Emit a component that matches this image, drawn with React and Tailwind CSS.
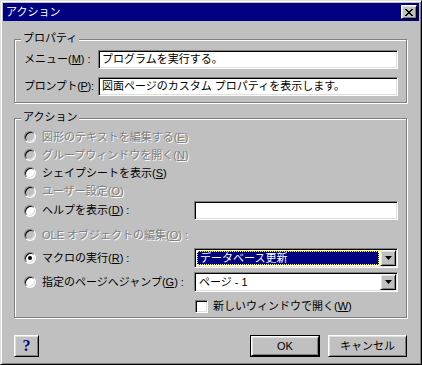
const sunken =
  "border border-t-[#808080] border-l-[#808080] border-b-white border-r-white shadow-[inset_1px_1px_0_#000,inset_-1px_-1px_0_#dfdfdf] p-[1px]";
const raised =
  "border border-t-white border-l-white border-b-black border-r-black shadow-[inset_1px_1px_0_#dfdfdf,inset_-1px_-1px_0_#808080]";
const etched = "border border-[#808080] shadow-[inset_1px_1px_0_#fff,1px_1px_0_#fff]";
const disabledText = "text-[#808080] [text-shadow:1px_1px_0_#fff]";

function Radio({ checked, disabled }) {
  return (
    <div
      className={`relative w-[12px] h-[12px] shrink-0 rounded-full border border-t-[#808080] border-l-[#808080] border-b-white border-r-white shadow-[inset_1px_1px_0_#000,inset_-1px_-1px_0_#dfdfdf] ${
        disabled ? "bg-[#c0c0c0]" : "bg-white"
      }`}
    >
      {checked && (
        <div className="absolute left-[3px] top-[3px] w-[4px] h-[4px] rounded-full bg-black" />
      )}
    </div>
  );
}

function Arrow() {
  return (
    <div className={`${raised} w-[16px] h-full flex items-center justify-center bg-[#c0c0c0]`}>
      <svg width="7" height="4" viewBox="0 0 7 4">
        <polygon points="0,0 7,0 3.5,4" fill="#000" />
      </svg>
    </div>
  );
}

function Legend({ children }) {
  return (
    <span className="absolute left-[6px] -top-[9px] px-[2px] bg-[#c0c0c0] leading-[14px]">
      {children}
    </span>
  );
}

const actions = [
  { label: <>図形のテキストを編集する(<u>E</u>)</>, disabled: true, h: "h-[18px]" },
  { label: <>グループウィンドウを開く(<u>N</u>)</>, disabled: true, h: "h-[18px]" },
  { label: <>シェイプシートを表示(<u>S</u>)</>, h: "h-[18px]" },
  { label: <>ユーザー設定(<u>O</u>)</>, disabled: true, h: "h-[19px]" },
];

export default function App() {
  return (
    <div className="w-[422px] h-[365px] bg-[#c0c0c0] text-[11px] text-black whitespace-nowrap font-['Liberation_Sans','Noto_Sans_CJK_JP',sans-serif] border border-t-[#dfdfdf] border-l-[#dfdfdf] border-b-black border-r-black shadow-[inset_1px_1px_0_#fff,inset_-1px_-1px_0_#808080] p-[2px] flex flex-col">
      {/* Title bar */}
      <div className="h-[18px] bg-[#000080] flex items-center justify-between pl-[3px] pr-[2px] text-white">
        <span className="leading-none">アクション</span>
        <div className={`${raised} w-[16px] h-[14px] bg-[#c0c0c0] flex items-center justify-center`}>
          <svg width="8" height="7" viewBox="0 0 8 7" shapeRendering="crispEdges">
            <path d="M0 0h2v1h1v1h2V1h1V0h2v1H7v1H6v1H5v1h1v1h1v1h1v1H6V6H5V5H3v1H2v1H0V6h1V5h1V4h1V3H2V2H1V1H0z" fill="#000" />
          </svg>
        </div>
      </div>

      <div className="flex flex-col px-[11px]">
        {/* プロパティ */}
        <div className={`relative mt-[18px] w-[393px] h-[64px] ${etched} pl-[9px] pt-[10px] flex flex-col gap-[8px]`}>
          <Legend>プロパティ</Legend>
          <div className="flex items-center h-[19px]">
            <span className="w-[74px] shrink-0">メニュー(<u>M</u>) :</span>
            <div className={`${sunken} bg-white w-[300px] h-[19px] flex items-center pl-[3px]`}>
              プログラムを実行する。
            </div>
          </div>
          <div className="flex items-center h-[19px]">
            <span className="w-[74px] shrink-0 tracking-[-0.3px]">プロンプト(<u>P</u>):</span>
            <div className={`${sunken} bg-white w-[300px] h-[19px] flex items-center pl-[3px]`}>
              図面ページのカスタム プロパティを表示します。
            </div>
          </div>
        </div>

        {/* アクション */}
        <div className={`relative mt-[15px] w-[393px] h-[200px] ${etched} pl-[9px] pt-[9px] flex flex-col`}>
          <Legend>アクション</Legend>
          {actions.map((a, i) => (
            <div key={i} className={`flex items-center gap-[6px] ${a.h}`}>
              <Radio disabled={a.disabled} />
              <span className={a.disabled ? disabledText : ""}>{a.label}</span>
            </div>
          ))}
          <div className="flex items-center h-[19px]">
            <div className="w-[170px] flex items-center gap-[6px]">
              <Radio />
              <span>ヘルプを表示(<u>D</u>) :</span>
            </div>
            <div className={`${sunken} bg-white w-[204px] h-[19px]`} />
          </div>
          <div className="flex items-center gap-[6px] h-[18px] mt-[6px]">
            <Radio disabled />
            <span className={disabledText}>OLE オブジェクトの編集(<u>O</u>) :</span>
          </div>
          <div className="flex items-center h-[20px] mt-[4px]">
            <div className="w-[170px] flex items-center gap-[6px]">
              <Radio checked />
              <span>マクロの実行(<u>R</u>) :</span>
            </div>
            <div className={`${sunken} bg-white w-[204px] h-[20px] flex`}>
              <div className="flex-1 p-[1px]">
                <div className="h-full bg-[#000080] border border-dotted border-[#ffff00] text-white flex items-center pl-[2px]">
                  データベース更新
                </div>
              </div>
              <Arrow />
            </div>
          </div>
          <div className="flex items-center h-[20px] mt-[4px]">
            <div className="w-[170px] flex items-center gap-[6px]">
              <Radio />
              <span>指定のページへジャンプ(<u>G</u>) :</span>
            </div>
            <div className={`${sunken} bg-white w-[204px] h-[20px] flex`}>
              <div className="flex-1 flex items-center pl-[3px]">ページ - 1</div>
              <Arrow />
            </div>
          </div>
          <div className="flex items-center h-[16px] mt-[6px] pl-[171px] gap-[5px]">
            <div className={`${sunken} bg-white w-[13px] h-[13px]`} />
            <span>新しいウィンドウで開く(<u>W</u>)</span>
          </div>
        </div>

        {/* Buttons */}
        <div className="mt-[17px] w-[393px] flex items-center">
          <div className={`${raised} w-[25px] h-[22px] flex items-center justify-center`}>
            <span className="font-['Liberation_Serif',serif] font-bold text-[16px] leading-none text-[#000080]">?</span>
          </div>
          <div className="ml-auto border border-black">
            <div className={`${raised} w-[68px] h-[20px] flex items-center justify-center`}>OK</div>
          </div>
          <div className={`${raised} ml-[8px] w-[79px] h-[22px] flex items-center justify-center`}>
            キャンセル
          </div>
        </div>
      </div>
    </div>
  );
}
